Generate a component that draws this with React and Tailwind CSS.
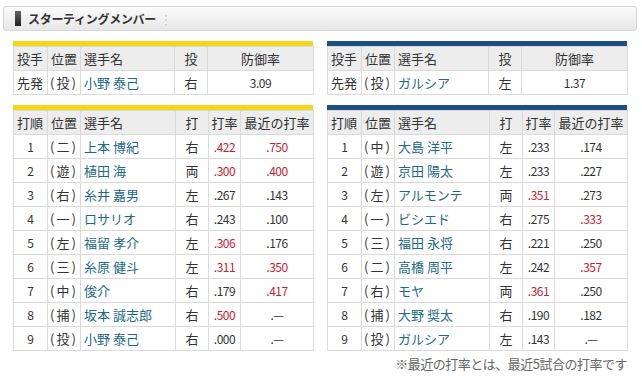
import React from "react";

const F = { fontFamily: '"Noto Sans CJK JP", "Noto Sans", sans-serif' };

const pitchers = {
  left: { pos: "投", name: "小野 泰己", hand: "右", era: "3.09" },
  right: { pos: "投", name: "ガルシア", hand: "左", era: "1.37" },
};

const leftBat = [
  ["1", "二", "上本 博紀", "右", ".422", true, ".750", true],
  ["2", "遊", "植田 海", "両", ".300", true, ".400", true],
  ["3", "右", "糸井 嘉男", "左", ".267", false, ".143", false],
  ["4", "一", "ロサリオ", "右", ".243", false, ".100", false],
  ["5", "左", "福留 孝介", "左", ".306", true, ".176", false],
  ["6", "三", "糸原 健斗", "左", ".311", true, ".350", true],
  ["7", "中", "俊介", "右", ".179", false, ".417", true],
  ["8", "捕", "坂本 誠志郎", "右", ".500", true, ".—", false],
  ["9", "投", "小野 泰己", "右", ".000", false, ".—", false],
];

const rightBat = [
  ["1", "中", "大島 洋平", "左", ".233", false, ".174", false],
  ["2", "遊", "京田 陽太", "左", ".233", false, ".227", false],
  ["3", "左", "アルモンテ", "両", ".351", true, ".273", false],
  ["4", "一", "ビシエド", "右", ".275", false, ".333", true],
  ["5", "三", "福田 永将", "右", ".221", false, ".250", false],
  ["6", "二", "高橋 周平", "左", ".242", false, ".357", true],
  ["7", "右", "モヤ", "両", ".361", true, ".250", false],
  ["8", "捕", "大野 奨太", "右", ".190", false, ".182", false],
  ["9", "投", "ガルシア", "左", ".143", false, ".—", false],
];

const td = "border border-[#dadada] h-[24px] p-0 leading-none overflow-hidden";
const th = "border border-[#dadada] h-[24px] p-0 font-normal bg-[#ededed] leading-none";

function Pos({ c }) {
  return (
    <span className="flex items-center pl-[2px] whitespace-nowrap">
      <span>(</span>
      <span className="ml-[2px]">{c}</span>
      <span className="ml-[2px]">)</span>
    </span>
  );
}

function Bar({ color }) {
  return <div className={`h-[5px] ${color}`} />;
}

function PitcherTable({ color, p }) {
  return (
    <div className="w-[300px]">
      <Bar color={color} />
      <table className="w-[300px] table-fixed border-collapse text-[13px] text-[#333]">
        <colgroup>
          <col className="w-[34px]" />
          <col className="w-[33px]" />
          <col className="w-[94px]" />
          <col className="w-[33px]" />
          <col className="w-[106px]" />
        </colgroup>
        <thead>
          <tr>
            <th className={`${th} text-left pl-[3px]`}>投手</th>
            <th className={`${th} text-left pl-[3px]`}>位置</th>
            <th className={`${th} text-left pl-[3px]`}>選手名</th>
            <th className={`${th} text-center`}>投</th>
            <th className={`${th} text-center`}>防御率</th>
          </tr>
        </thead>
        <tbody>
          <tr>
            <td className={`${td} pl-[3px]`}>先発</td>
            <td className={td}><Pos c={p.pos} /></td>
            <td className={`${td} pl-[3px] text-[#1d6a86]`}>{p.name}</td>
            <td className={`${td} text-center`}>{p.hand}</td>
            <td className={`${td} text-center text-[12px] tracking-[-0.5px]`}>{p.era}</td>
          </tr>
        </tbody>
      </table>
    </div>
  );
}

function BatTable({ color, rows }) {
  return (
    <div className="w-[300px]">
      <Bar color={color} />
      <table className="w-[300px] table-fixed border-collapse text-[13px] text-[#333]">
        <colgroup>
          <col className="w-[34px]" />
          <col className="w-[33px]" />
          <col className="w-[95px]" />
          <col className="w-[33px]" />
          <col className="w-[32px]" />
          <col className="w-[73px]" />
        </colgroup>
        <thead>
          <tr>
            <th className={`${th} text-left pl-[3px]`}>打順</th>
            <th className={`${th} text-left pl-[3px]`}>位置</th>
            <th className={`${th} text-left pl-[3px]`}>選手名</th>
            <th className={`${th} text-center`}>打</th>
            <th className={`${th} text-center`}>打率</th>
            <th className={`${th} text-center`}>最近の打率</th>
          </tr>
        </thead>
        <tbody>
          {rows.map((r) => (
            <tr key={r[0]}>
              <td className={`${td} text-center text-[12px]`}>{r[0]}</td>
              <td className={td}><Pos c={r[1]} /></td>
              <td className={`${td} pl-[3px] text-[#1d6a86] whitespace-nowrap`}>{r[2]}</td>
              <td className={`${td} text-center`}>{r[3]}</td>
              <td className={`${td} text-center text-[12px] tracking-[-0.5px] ${r[5] ? "text-[#c8202f]" : ""}`}>{r[4]}</td>
              <td className={`${td} text-center text-[12px] tracking-[-0.5px] ${r[7] ? "text-[#c8202f]" : ""}`}>{r[6]}</td>
            </tr>
          ))}
        </tbody>
      </table>
    </div>
  );
}

export default function App() {
  return (
    <div className="w-[642px] h-[378px] bg-white overflow-hidden" style={F}>
      <div className="pt-[6px] px-[3px] pr-[5px]">
        <div className="h-[25px] border border-[#d6d6d6] rounded-[3px] bg-gradient-to-b from-[#fbfbfb] to-[#e7e7e7] flex items-center pl-[11px]">
          <div className="w-[6px] h-[15px] bg-gradient-to-b from-[#666] to-[#222]" />
          <span className="ml-[7px] text-[12px] font-bold text-[#333] tracking-[-0.3px]">スターティングメンバー</span>
          <span className="ml-[4px] text-[12px] text-[#c8c8c8]">⋮</span>
        </div>
      </div>
      <div className="pl-[13px] pt-[10px] flex gap-[14px]">
        <PitcherTable color="bg-[#f5d71a]" p={pitchers.left} />
        <PitcherTable color="bg-[#1c4f82]" p={pitchers.right} />
      </div>
      <div className="pl-[13px] pt-[10px] flex gap-[14px]">
        <BatTable color="bg-[#f5d71a]" rows={leftBat} />
        <BatTable color="bg-[#1c4f82]" rows={rightBat} />
      </div>
      <div className="w-[627px] text-right text-[13px] text-[#666] pt-[3px] tracking-[-0.5px]">
        ※最近の打率とは、最近5試合の打率です
      </div>
    </div>
  );
}
